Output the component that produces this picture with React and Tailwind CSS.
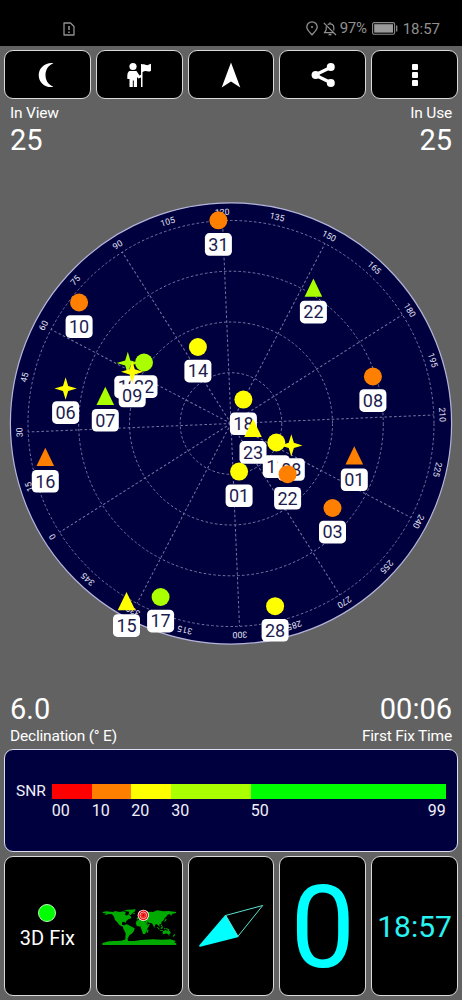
import React from "react";

const ORANGE = "#ff8000";
const YELLOW = "#ffff00";
const LIME = "#aaff00";

// ---------- sky plot ----------
const CX = 231;
const CY = 423.5;
const HEADING = 122.4;

const rings = [50.8, 101.5, 152.3, 203];
const bearings = Array.from({ length: 24 }, (_, i) => i * 15);

// drawn in order, later ones cover earlier ones
const satellites = [
  { id: "31", x: 218.4, y: 220.3, shape: "circle", color: ORANGE },
  { id: "10", x: 79.1, y: 302.5, shape: "circle", color: ORANGE },
  { id: "14", x: 197.9, y: 347, shape: "circle", color: YELLOW },
  { id: "08", x: 372.9, y: 376.5, shape: "circle", color: ORANGE },
  { id: "18", x: 243.4, y: 399.6, shape: "circle", color: YELLOW },
  { id: "01", x: 239.1, y: 471.6, shape: "circle", color: YELLOW },
  { id: "03", x: 332.5, y: 508, shape: "circle", color: ORANGE },
  { id: "17", x: 160.6, y: 597, shape: "circle", color: LIME },
  { id: "28", x: 275.1, y: 606.2, shape: "circle", color: YELLOW },
  { id: "22", x: 313.4, y: 288, shape: "triangle", color: LIME },
  { id: "07", x: 105.3, y: 396.2, shape: "triangle", color: LIME },
  { id: "16", x: 45.3, y: 457.2, shape: "triangle", color: ORANGE },
  { id: "23", x: 253, y: 428.3, shape: "triangle", color: YELLOW },
  { id: "01", x: 354.3, y: 455.6, shape: "triangle", color: ORANGE },
  { id: "15", x: 126.5, y: 601.5, shape: "triangle", color: YELLOW },
  { id: "06", x: 65.6, y: 388.5, shape: "star", color: YELLOW },
  { id: "12", x: 127.8, y: 363, shape: "star", color: LIME },
  { id: "22", x: 144, y: 362.5, shape: "circle", color: LIME },
  { id: "09", x: 132.2, y: 371.8, shape: "star", color: YELLOW },
  { id: "11", x: 276.3, y: 442.5, shape: "circle", color: YELLOW },
  { id: "08", x: 291.3, y: 445.4, shape: "star", color: YELLOW },
  { id: "22", x: 287.6, y: 474.2, shape: "circle", color: ORANGE },
];

const Satellite = ({ sat }) => (
  <g transform={`translate(${sat.x} ${sat.y})`}>
    {sat.shape === "circle" && <circle r="9" fill={sat.color} />}
    {sat.shape === "triangle" && (
      <path d="M0-9.4 8.8 8.8H-8.8z" fill={sat.color} />
    )}
    {sat.shape === "star" && (
      <path
        d="M0-11.2 2.6-2.6 11.2 0 2.6 2.6 0 11.2-2.6 2.6-11.2 0-2.6-2.6z"
        fill={sat.color}
      />
    )}
    <rect x="-13.5" y="12.8" width="27" height="22.6" rx="4.5" fill="#fff" />
    <text y="30.4" fontSize="18" textAnchor="middle" fill="#1c1c50">
      {sat.id}
    </text>
  </g>
);

const SkyPlot = () => (
  <svg className="block h-[537px] w-[462px]" viewBox="0 155 462 537">
    <circle cx={CX} cy={CY} r="220.6" fill="#00003e" stroke="#b4b4dc" strokeWidth="1.2" />
    <g fill="none" stroke="#7676a4" strokeWidth="1" strokeDasharray="2.6 2.2">
      {rings.map(r => (
        <circle key={r} cx={CX} cy={CY} r={r} />
      ))}
      {bearings
        .filter(b => b % 30 === 0)
        .map(b => (
          <line
            key={b}
            x1={CX}
            y1={CY}
            x2={CX}
            y2={CY - 203}
            transform={`rotate(${b - HEADING} ${CX} ${CY})`}
          />
        ))}
    </g>
    <g fontSize="8.7" fill="#e4e4f4" textAnchor="middle">
      {bearings.map(b => (
        <text
          key={b}
          x={CX}
          y={CY - 208.6}
          transform={`rotate(${b - HEADING} ${CX} ${CY})`}
        >
          {b}
        </text>
      ))}
    </g>
    {satellites.map((sat, i) => (
      <Satellite key={i} sat={sat} />
    ))}
  </svg>
);

// ---------- status bar ----------
const StatusBar = () => (
  <div className="flex h-[46px] items-center bg-black pt-[11px] pr-[22px] pl-[63px] text-[15px] text-[#919191]">
    <svg className="h-[14px] w-[12px]" viewBox="0 0 12 14" fill="none" stroke="currentColor" strokeWidth="1.3">
      <path d="M1 1h6.5L11 4.5V13H1z" strokeLinejoin="round" />
      <path d="M6 4v4M6 9.4v1.6" strokeWidth="1.6" />
    </svg>
    <svg className="ml-auto h-[15px] w-[12px]" viewBox="0 0 12 15" fill="none" stroke="currentColor" strokeWidth="1.3">
      <path d="M6 13.8C4.500 12 .8 9 .8 6a5.200 5.200 0 0 1 10.400 0c0 3-3.700 6-5.200 7.800z" />
      <circle cx="6" cy="6" r="1" fill="currentColor" stroke="none" />
    </svg>
    <svg className="ml-[5px] h-[14px] w-[14px]" viewBox="0 0 14 14" fill="none" stroke="currentColor" strokeWidth="1.2">
      <path d="M.8 .8 13 13" />
      <path d="M4.700 2.500C5.300 2 6 1.800 7 1.800c2.400 0 3.800 1.700 3.800 4v2.600M3.400 4.200C3.100 5 3.200 7 3.100 8L1.500 10.600h8.800M7 .3v1.500" />
      <path d="M5.600 12.600h2.800" strokeWidth="1.5" />
    </svg>
    <span className="ml-[3px] w-[29px] leading-none tracking-[-0.2px]">97%</span>
    <svg className="ml-[3px] h-[13px] w-[26px]" viewBox="0 0 26 13">
      <rect x=".6" y=".6" width="22" height="11.600" rx="1.500" fill="none" stroke="#8a8a8a" strokeWidth="1.1" />
      <rect x="2.200" y="2.200" width="18.800" height="8.400" fill="#9a9a9a" />
      <path d="M24.700 3.500v6" stroke="#8a8a8a" strokeWidth="1.300" />
    </svg>
    <span className="ml-[5px] pt-px leading-none">18:57</span>
  </div>
);

// ---------- toolbar ----------
const ToolButton = ({ children }) => (
  <button className="flex items-center justify-center rounded-[9px] border border-[#dadada] bg-black">
    <svg className="h-[30px] w-[30px]" viewBox="0 0 30 30" fill="#fff">
      {children}
    </svg>
  </button>
);

const Toolbar = () => (
  <div className="mt-1 grid h-[49px] grid-cols-5 gap-[5px] px-1">
    <ToolButton>
      <path d="M21.500 3.200C14 2 6.700 7.500 6.700 15.200s7.300 13.200 14.800 11.600C15.500 24.500 13.500 19.500 13.500 15s2-9.500 8-11.800z" />
    </ToolButton>
    <ToolButton>
      <circle cx="9" cy="6.500" r="3.600" />
      <path d="M5.500 11h7l3 4.500 1.500-.8V4h1.500v.8c2-1.500 3.500 1 5.500.2 1.200-.4 2-1 3-1.200v7c-2.500 1.800-4 0-6 .3-1 .2-1.700.6-2.500 1V27H17V17.500l-2.600 1L13 17v10H9.800v-6.500h-1V27H5.500v-8H3.400c-.2-3.500-.2-7 2.100-8z" />
    </ToolButton>
    <ToolButton>
      <path d="M15 2.500 24.300 27.500 15 21.500 5.700 27.500z" />
    </ToolButton>
    <ToolButton>
      <path d="M23 7.200 7 15l16 7.800" fill="none" stroke="#fff" strokeWidth="3.200" />
      <circle cx="22.800" cy="7" r="4" />
      <circle cx="7.600" cy="15" r="4" />
      <circle cx="22.800" cy="23" r="4" />
    </ToolButton>
    <ToolButton>
      <rect x="12" y="4" width="6" height="6" rx="1" />
      <rect x="12" y="12" width="6" height="6" rx="1" />
      <rect x="12" y="20" width="6" height="6" rx="1" />
    </ToolButton>
  </div>
);

// ---------- SNR legend ----------
const snrLevels = [
  { label: "00", bar: "w-[40px] bg-[#ff0000]" },
  { label: "10", bar: "w-[39.5px] bg-[#ff8000]" },
  { label: "20", bar: "w-[40px] bg-[#ffff00]" },
  { label: "30", bar: "w-[79.5px] bg-[#aaff00]" },
  { label: "50", bar: "w-[195px] bg-[#00ff00]", end: "99" },
];

const SnrPanel = () => (
  <div className="mx-1 mt-[3px] flex h-[103px] rounded-[9px] border border-[#dcdcf2] bg-[#00003e] pt-[34px] pl-[11px] text-[15.5px] leading-[15px] text-[#f0f0fa]">
    <div className="w-[35.7px]">SNR</div>
    <div className="flex">
      {snrLevels.map(level => (
        <div key={level.label}>
          <div className={`h-[15px] ${level.bar}`} />
          <div className="flex justify-between pt-[4px] text-[16px]">
            <span>{level.label}</span>
            {level.end && <span>{level.end}</span>}
          </div>
        </div>
      ))}
    </div>
  </div>
);

// ---------- bottom tiles ----------
const Tile = ({ children }) => (
  <div className="flex min-w-0 flex-col items-center justify-center overflow-hidden rounded-[9px] border border-[#dadada] bg-black pt-[2px]">
    {children}
  </div>
);

const WorldMap = () => (
  <svg className="h-[37px] w-[75px]" viewBox="0 0 225 111">
    <g fill="#00aa00">
      <path d="M1 9 13 7 34 9 39 6 52 9 66 7 72 11 68 16 74 20 79 16 86 22 88 28 79 31 73 36 71 42 67 38 60 40 60 47 66 49 71 55 77 57 75 60 67 58 60 52 53 49 45 39 39 33 36 23 30 16 21 15 6 19 13 14 3 12z" />
      <path d="M65 5 76 2 101 1 99 7 91 13 85 19 80 15 82 8 72 7z" />
      <path d="M67 48l8 3-1 1-8-3zM93 12l7-1-2 3h-5z" />
      <path d="M68 47 75 46 89 53 98 58 96 66 89 74 82 79 77 89 76 97 70 96 70 87 71 73 66 63 63 57z" />
      <path d="M104 32 105 26 110 24 107 20 116 18 119 11 129 7 139 9 147 8 153 9 166 4 184 7 200 6 222 9 222 12 210 15 208 21 203 15 197 17 192 24 188 27 185 34 179 38 178 44 172 46 173 54 168 49 164 45 159 48 157 57 152 46 147 41 142 43 136 37 137 45 144 45 140 51 133 43 128 34 120 33 115 28z" />
      <path d="M104 35 113 31 126 35 131 40 136 49 142 50 136 59 134 67 129 75 123 75 118 61 116 53 105 51 101 43z" />
      <path d="M137 61l3 3-3 8-3-2zM110 16l3-3 1 5-4 2zM191 27l3 6-6 5-2-1 4-5zM178 46l5 8-2 1-5-7zM167 53l6 8-1 2-7-8zM174 63l9 1v2l-9-1zM180 53l3 4-5 3-3-3zM186 56l5 1-4 5zM193 57l10 5-3 2-9-4z" />
      <path d="M184 66 191 63 196 65 199 62 206 70 204 76 199 77 194 73 184 76 181 71zM217 75l3 3-7 6-1-2zM200 78l3 0-2 3z" />
      <path d="M1 102 21 97 58 95 75 90 79 96 98 96 117 93 153 91 180 92 205 91 221 96 217 101 223 103V108H1z" />
    </g>
    <circle cx="124" cy="19" r="17" fill="#fff" />
    <circle cx="124" cy="19" r="14.500" fill="#e80000" />
    <circle cx="124" cy="19" r="10" fill="none" stroke="#fff" strokeWidth="2" />
    <circle cx="124" cy="19" r="5.500" fill="none" stroke="#ffb0b0" strokeWidth="1.200" />
  </svg>
);

const Compass = () => (
  <svg className="h-[60px] w-[72px]" viewBox="195 897 72 60" stroke="#00ffff" strokeLinejoin="round">
    <path d="M200 945.800 225.500 916 237.500 936.500z" fill="#00ffff" strokeWidth="1.800" />
    <path d="M225.500 915.500 262.700 905.500 237.800 936.500z" fill="none" stroke="#5ce0d0" strokeWidth="1" />
  </svg>
);

const BottomTiles = () => (
  <div className="mt-1 grid h-[140px] grid-cols-5 gap-[5px] px-1">
    <Tile>
      <div className="size-[18px] rounded-full border border-[#b9f5b9] bg-[#00ff00]" />
      <div className="mt-1 text-[20px] leading-[24px] text-white">3D Fix</div>
    </Tile>
    <Tile>
      <WorldMap />
    </Tile>
    <Tile>
      <Compass />
    </Tile>
    <Tile>
      <div className="text-[115px] leading-[115px] text-[#00ffff]">0</div>
    </Tile>
    <Tile>
      <div className="text-[30px] leading-[30px] text-[#28f4f4]">18:57</div>
    </Tile>
  </div>
);

const App = () => (
  <div className="h-[1000px] w-[462px] overflow-hidden bg-[#626262] font-['Roboto',sans-serif] text-white">
    <StatusBar />
    <Toolbar />
    <div className="mt-1 flex h-[52px] justify-between px-[10px]">
      <div>
        <div className="text-[15.5px] leading-[20px] tracking-[-0.2px]">In View</div>
        <div className="text-[29px] leading-[34px]">25</div>
      </div>
      <div className="text-right">
        <div className="text-[15.5px] leading-[20px] tracking-[-0.2px]">In Use</div>
        <div className="text-[29px] leading-[34px]">25</div>
      </div>
    </div>
    <SkyPlot />
    <div className="flex justify-between px-[10px]">
      <div>
        <div className="text-[29px] leading-[34px]">6.0</div>
        <div className="text-[15.5px] leading-[20px] tracking-[-0.2px]">Declination (° E)</div>
      </div>
      <div className="text-right">
        <div className="text-[29px] leading-[34px]">00:06</div>
        <div className="text-[15.5px] leading-[20px] tracking-[-0.2px]">First Fix Time</div>
      </div>
    </div>
    <SnrPanel />
    <BottomTiles />
  </div>
);

export default App;
